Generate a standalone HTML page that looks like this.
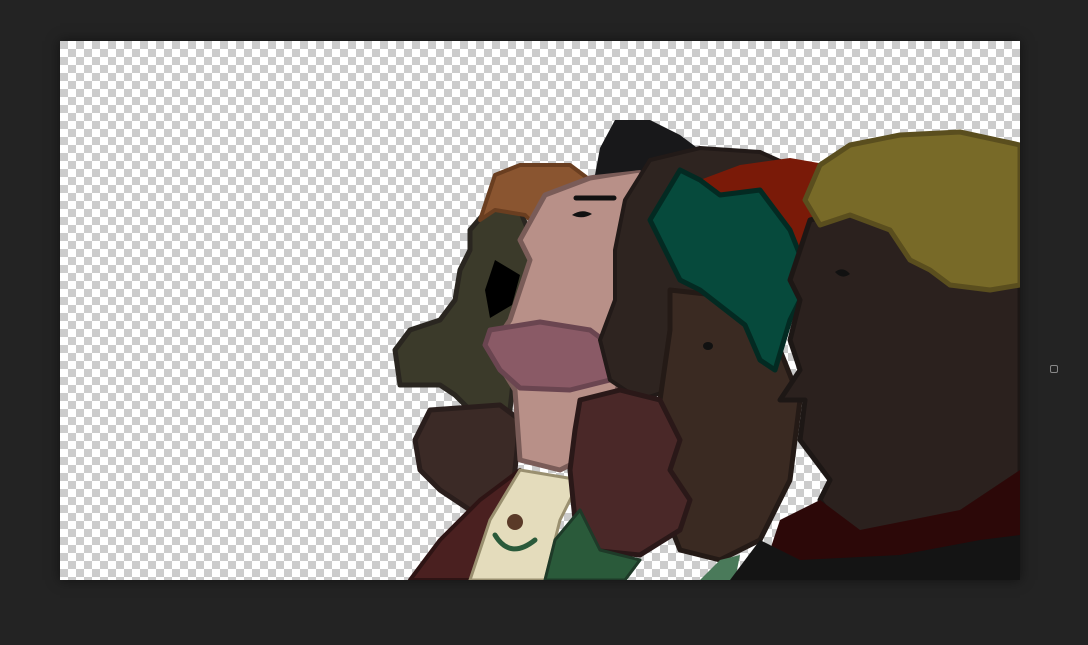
<!DOCTYPE html>
<html><head><meta charset="utf-8"><style>
html,body{margin:0;padding:0;background:#232323;width:1088px;height:645px;overflow:hidden}
#c{position:absolute;left:60px;top:41px;width:960px;height:539px;
background-color:#fff;
background-image:linear-gradient(45deg,#ccc 25%,transparent 25%,transparent 75%,#ccc 75%),linear-gradient(45deg,#ccc 25%,transparent 25%,transparent 75%,#ccc 75%);
background-size:16px 16px;background-position:8px 0,0 8px;box-shadow:0 0 12px rgba(0,0,0,.5)}
svg{position:absolute;left:0;top:0}
#ic{position:absolute;left:1050px;top:365px;width:6px;height:6px;border:1px solid #888;border-radius:2px}
</style></head><body>
<div id="c"></div>
<svg width="1088" height="645" viewBox="0 0 1088 645">
<defs><clipPath id="k"><rect x="60" y="41" width="960" height="539"/></clipPath></defs>
<g clip-path="url(#k)" stroke-linejoin="round" stroke-linecap="round">
<!-- olive figure -->
<path d="M470,230 L500,195 L520,210 L540,260 L520,320 L510,410 L470,410 L455,395 L440,385 L400,385 L395,350 L410,330 L440,320 L455,300 L460,270 L470,250 Z" fill="#3b3a2a" stroke="#2a2620" stroke-width="5"/>
<path d="M480,220 L495,175 L520,165 L570,165 L590,180 L560,200 L540,230 L525,215 L495,210 Z" fill="#8a5530" stroke="#6a3e20" stroke-width="4"/>
<path d="M495,260 L520,275 L512,305 L490,318 L485,290 Z" fill="#000"/>
<path d="M430,410 L415,440 L420,470 L440,490 L470,510 L510,520 L520,420 L500,405 Z" fill="#3b2a26" stroke="#2a1e1c" stroke-width="5"/>
<path d="M410,580 L440,540 L480,500 L520,470 L520,580 Z" fill="#4a2020" stroke="#2e1414" stroke-width="4"/>
<!-- pink figure -->
<path d="M545,195 L590,178 L640,170 L650,190 L640,300 L620,380 L600,450 L560,470 L520,460 L515,390 L490,350 L510,320 L530,260 L520,240 Z" fill="#b89088" stroke="#7a5c58" stroke-width="5"/>
<path d="M595,175 L600,148 L615,120 L650,120 L680,135 L700,150 L660,185 L640,170 Z" fill="#18181a"/>
<line x1="576" y1="198" x2="614" y2="198" stroke="#111" stroke-width="5"/>
<path d="M572,215 Q582,208 592,214 Q582,220 572,215Z" fill="#111"/>
<path d="M490,330 L540,322 L590,330 L610,345 L610,380 L570,390 L520,388 L500,370 L485,345 Z" fill="#8a5a66" stroke="#6a4550" stroke-width="5"/>
<path d="M470,580 L490,520 L520,470 L580,480 L560,520 L545,580 Z" fill="#e4dcbc" stroke="#9a9070" stroke-width="3"/>
<path d="M495,535 Q510,560 535,540" fill="none" stroke="#2a5a3a" stroke-width="5"/>
<circle cx="515" cy="522" r="8" fill="#5a3a28"/>
<!-- brown figure -->
<path d="M625,200 L650,160 L700,148 L760,152 L800,170 L760,280 L700,380 L640,400 L610,380 L600,340 L615,300 L615,250 Z" fill="#2e2420" stroke="#221a18" stroke-width="4"/>
<path d="M700,180 L740,165 L790,158 L830,165 L820,240 L800,260 L760,230 L720,200 Z" fill="#7a1a08"/>
<path d="M670,290 L760,300 L780,350 L800,400 L790,480 L760,540 L720,560 L680,550 L660,500 L650,450 L660,400 L670,330 Z" fill="#3a2a22" stroke="#241a16" stroke-width="5"/>
<ellipse cx="708" cy="346" rx="5" ry="4" fill="#111"/>
<path d="M580,400 L620,390 L660,400 L680,440 L670,470 L690,500 L680,530 L640,555 L590,550 L575,520 L570,470 L575,430 Z" fill="#4a2828" stroke="#2a1818" stroke-width="5"/>
<path d="M650,220 L680,170 L700,180 L720,195 L760,190 L790,230 L810,280 L790,320 L775,370 L760,360 L745,325 L700,290 L680,280 Z" fill="#064a3c" stroke="#032a22" stroke-width="5"/>
<path d="M545,580 L555,540 L580,510 L600,550 L640,560 L625,580 Z" fill="#2a5a3a" stroke="#1e3a28" stroke-width="3"/>
<path d="M700,580 L720,560 L740,555 L735,580 Z" fill="#4a7a5a"/>
<!-- right figure -->
<path d="M810,220 L900,200 L1020,200 L1020,480 L960,520 L880,540 L840,530 L820,500 L830,480 L815,460 L800,440 L805,400 L780,400 L800,370 L790,340 L800,300 L790,280 L800,250 Z" fill="#2b211e" stroke="#1d1715" stroke-width="5"/>
<path d="M760,580 L780,520 L820,500 L860,530 L960,510 L1020,470 L1020,580 Z" fill="#2c0808"/>
<path d="M730,580 L760,540 L800,560 L900,555 L980,540 L1020,535 L1020,580 Z" fill="#141414"/>
<path d="M805,200 L820,165 L850,145 L900,135 L960,132 L1020,145 L1020,285 L990,290 L950,285 L930,270 L910,260 L890,230 L850,215 L820,225 Z" fill="#786a28" stroke="#5a4e1e" stroke-width="5"/>
<path d="M835,272 Q843,266 850,274 Q842,280 835,272Z" fill="#111"/>
</g>
</svg>
<div id="ic"></div>
</body></html>
